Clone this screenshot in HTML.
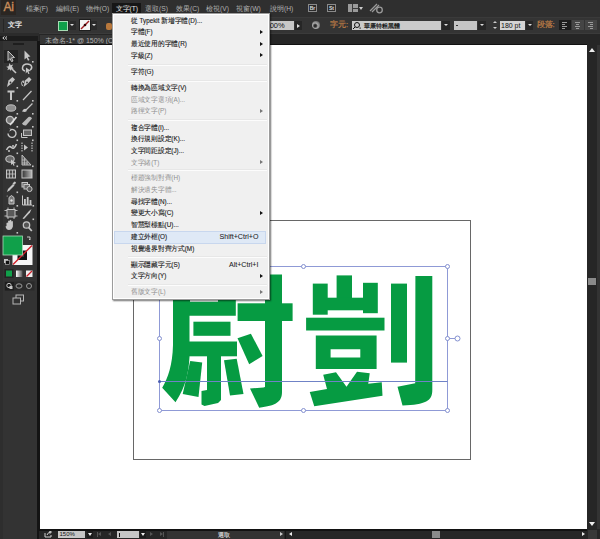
<!DOCTYPE html>
<html><head><meta charset="utf-8">
<style>
*{margin:0;padding:0;box-sizing:border-box}
html,body{width:600px;height:539px;overflow:hidden;background:#fff;font-family:"Liberation Sans",sans-serif}
.a{position:absolute}
.mb{position:absolute;top:4px;font-size:6.7px;line-height:10px;color:#b4b4b4;white-space:nowrap}
.mi{position:absolute;left:18px;font-size:6.6px;line-height:10px;color:#1a1a1a;-webkit-text-stroke:0.12px #1a1a1a;white-space:nowrap;transform:scaleX(0.96);transform-origin:0 50%}
.mi.g{color:#8e8e8e;-webkit-text-stroke:0}
.ar{position:absolute;left:147.5px;width:0;height:0;border-top:2.5px solid transparent;border-bottom:2.5px solid transparent;border-left:3px solid #111}
.ar.g{border-left-color:#777}
.sep{position:absolute;left:15px;width:139px;height:2px;border-top:1px solid #e7e7e7;border-bottom:1px solid #fcfcfc}
</style></head><body>
<!-- menubar -->
<div class="a" style="left:0;top:0;width:600px;height:16.5px;background:#2f2f2f"></div>
<div class="a" style="left:1px;top:0;width:15px;height:15px;background:#2b2622"></div>
<div class="a" style="left:3.5px;top:1px;font-size:12px;line-height:13px;color:#c98e5c;letter-spacing:-0.2px;-webkit-text-stroke:0.35px #c98e5c">Ai</div>
<div class="a" style="left:112px;top:3px;width:29px;height:10px;background:#161616"></div>
<div class="mb" style="left:25.5px">檔案(F)</div>
<div class="mb" style="left:56px">編輯(E)</div>
<div class="mb" style="left:85.5px">物件(O)</div>
<div class="mb" style="left:115.5px;color:#e8e8e8">文字(T)</div>
<div class="mb" style="left:145px">選取(S)</div>
<div class="mb" style="left:176px">效果(C)</div>
<div class="mb" style="left:206px">檢視(V)</div>
<div class="mb" style="left:236px">視窗(W)</div>
<div class="mb" style="left:270px">說明(H)</div>
<div class="a" style="left:308px;top:4px;width:9px;height:8px;border:1px solid #8a8a8a;background:#2a2a2a;font-size:5px;line-height:6px;color:#ddd;text-align:center;font-weight:bold">Br</div>
<div class="a" style="left:327px;top:4px;width:9px;height:8px;border:1px solid #8a8a8a;background:#2a2a2a;font-size:5px;line-height:6px;color:#ddd;text-align:center;font-weight:bold">St</div>
<div class="a" style="left:348px;top:4px;width:10px;height:8px;background:#9a9a9a"></div>
<div class="a" style="left:352px;top:4px;width:1px;height:8px;background:#3a3a3a"></div>
<div class="a" style="left:353px;top:7.5px;width:5px;height:1px;background:#3a3a3a"></div>
<div class="a" style="left:359px;top:7px;width:0;height:0;border-left:2px solid transparent;border-right:2px solid transparent;border-top:3px solid #ccc"></div>
<svg class="a" style="left:369px;top:3px" width="16" height="11"><g stroke="#9a9a9a" stroke-width="1.3" fill="none"><line x1="1" y1="8" x2="8" y2="1"/><line x1="3" y1="9" x2="10" y2="2"/><circle cx="10.5" cy="7" r="2.8"/></g></svg>

<!-- control bar -->
<div class="a" style="left:0;top:16.5px;width:600px;height:17px;background:#343434;border-top:1px solid #3a3a3a;border-bottom:1px solid #3b3b3b"></div>
<div class="a" style="left:2.5px;top:18.5px;width:1px;height:13px;background:#262626"></div>
<div class="a" style="left:8px;top:19.5px;font-size:7px;line-height:10px;color:#e4e4e4;-webkit-text-stroke:0.25px #e4e4e4">文字</div>
<div class="a" style="left:57.5px;top:20px;width:11px;height:11px;background:#262626"></div>
<div class="a" style="left:58px;top:20.5px;width:10px;height:10px;background:#10a04a;border:1px solid #a6dcb4"></div>
<div class="a" style="left:69.5px;top:21px;width:6px;height:9px;background:#2a2a2a"></div>
<div class="a" style="left:70px;top:24px;width:0;height:0;border-left:2px solid transparent;border-right:2px solid transparent;border-top:2.5px solid #ddd"></div>
<div class="a" style="left:79px;top:19px;width:12px;height:12px;background:#1e1e1e"></div>
<div class="a" style="left:80px;top:20px;width:10px;height:10px;background:#f4f4f4"></div>
<svg class="a" style="left:80px;top:20px" width="10" height="10"><line x1="1" y1="9" x2="9" y2="1" stroke="#a01c22" stroke-width="1.5"/><circle cx="5" cy="5" r="1.3" fill="#300"/></svg>
<div class="a" style="left:91px;top:21px;width:6px;height:9px;background:#2a2a2a"></div>
<div class="a" style="left:92px;top:24px;width:0;height:0;border-left:2px solid transparent;border-right:2px solid transparent;border-top:2.5px solid #ddd"></div>
<div class="a" style="left:105.5px;top:22.5px;width:6.5px;height:7px;background:#b8783c;border-radius:2px"></div>
<div class="a" style="left:262px;top:21px;width:32px;height:9px;background:#c8c8c8;font-size:7.5px;line-height:9px;color:#111;padding-left:3.5px">100%</div>
<div class="a" style="left:295px;top:21px;width:7px;height:9px;background:#262626"></div>
<div class="a" style="left:297px;top:23.5px;width:0;height:0;border-top:2px solid transparent;border-bottom:2px solid transparent;border-left:3px solid #ddd"></div>
<div class="a" style="left:312px;top:21px;width:8px;height:8px;border-radius:50%;background:radial-gradient(circle at 40% 60%,#222 0,#333 18%,#aaa 40%,#666 75%)"></div>
<div class="a" style="left:330px;top:20px;font-size:7.5px;line-height:10px;color:#b97a45;-webkit-text-stroke:0.25px #b97a45">字元:</div>
<div class="a" style="left:352px;top:21px;width:89px;height:9px;background:#cacaca"></div>
<svg class="a" style="left:352px;top:21px" width="10" height="9"><g stroke="#111" stroke-width="1" fill="none"><circle cx="5" cy="4" r="2.5"/><line x1="3" y1="6" x2="1" y2="8"/></g><rect x="7.5" y="6.5" width="1.2" height="1.2" fill="#111"/></svg>
<div class="a" style="left:364px;top:20.5px;font-size:6.2px;line-height:9px;color:#111;-webkit-text-stroke:0.2px #111">華康特粗黑體</div>
<div class="a" style="left:442px;top:21px;width:8px;height:9px;background:#262626"></div>
<div class="a" style="left:444px;top:24px;width:0;height:0;border-left:2px solid transparent;border-right:2px solid transparent;border-top:2.5px solid #ddd"></div>
<div class="a" style="left:454px;top:20.5px;width:23px;height:9px;background:#c4c4c4"></div>
<div class="a" style="left:456px;top:25px;width:2px;height:1px;background:#333"></div>
<div class="a" style="left:478px;top:21px;width:8px;height:9px;background:#262626"></div>
<div class="a" style="left:480px;top:24px;width:0;height:0;border-left:2px solid transparent;border-right:2px solid transparent;border-top:2.5px solid #ddd"></div>
<div class="a" style="left:493px;top:21px;width:0;height:0;border-left:2px solid transparent;border-right:2px solid transparent;border-bottom:2.5px solid #ccc"></div>
<div class="a" style="left:493px;top:26.5px;width:0;height:0;border-left:2px solid transparent;border-right:2px solid transparent;border-top:2.5px solid #ccc"></div>
<div class="a" style="left:500px;top:20.5px;width:25px;height:9.5px;background:#d4d4d4;font-size:7px;line-height:9.5px;color:#111;padding-left:1px">180 pt</div>
<div class="a" style="left:526px;top:21px;width:7px;height:9px;background:#262626"></div>
<div class="a" style="left:527.5px;top:24px;width:0;height:0;border-left:2px solid transparent;border-right:2px solid transparent;border-top:2.5px solid #ddd"></div>
<div class="a" style="left:536.5px;top:20px;font-size:7.5px;line-height:10px;color:#b97a45;-webkit-text-stroke:0.25px #b97a45">段落:</div>
<div class="a" style="left:559px;top:20px;width:11.5px;height:10px;background:#1c1c1c"></div>
<div class="a" style="left:572px;top:20px;width:12px;height:10px;background:#454545"></div>
<div class="a" style="left:585px;top:20px;width:12px;height:10px;background:#454545"></div>
<svg class="a" style="left:559px;top:20px" width="40" height="10"><g stroke="#9a9a9a" stroke-width="1"><path d="M3,2.5h5M3,4.5h3M3,6.5h5M3,8.5h3"/><path d="M16,2.5h5M17,4.5h3M16,6.5h5M17,8.5h3"/><path d="M29,2.5h5M31,4.5h3M29,6.5h5M31,8.5h3"/></g></svg>

<!-- tab bar -->
<div class="a" style="left:0;top:33.5px;width:600px;height:11.5px;background:#262626"></div>
<div class="a" style="left:39.5px;top:34.5px;width:73px;height:9.5px;background:#363636"></div>
<div class="a" style="left:45px;top:35.5px;font-size:7px;line-height:9px;color:#b4b4b4;white-space:nowrap">未命名-1* @ 150% (CMYK/預覽)</div>
<div class="a" style="left:39px;top:44px;width:548px;height:1px;background:#111"></div>
<!-- left panel -->
<div class="a" style="left:0;top:33px;width:39px;height:506px;background:#2b2b2b"></div>
<div class="a" style="left:0;top:35.5px;width:38px;height:5.5px;background:#1c1c1c"></div>
<svg class="a" style="left:2px;top:36px" width="6" height="4"><path d="M2.5,0.5 L0.8,2 L2.5,3.5 M5,0.5 L3.3,2 L5,3.5" fill="none" stroke="#e0e0e0" stroke-width="1"/></svg>
<div class="a" style="left:0;top:41px;width:38px;height:498px;background:#333333"></div>
<div class="a" style="left:13px;top:42.5px;width:11px;height:2px;background:#1e1e1e"></div>
<div class="a" style="left:37px;top:41px;width:2.5px;height:498px;background:#141414"></div>
<div class="a" style="left:0;top:41px;width:2.5px;height:498px;background:#2e2e2e"></div>
<div class="a" style="left:4px;top:50px;width:14px;height:12.5px;background:#242424"></div>
<svg class="a" style="left:0;top:45px" width="38" height="265" viewBox="0 45 38 265">
<g fill="#c6c6c6" stroke="none">
<!-- flyout dots -->
<rect x="32" y="61" width="1.6" height="1.6"/>
<rect x="16.5" y="87" width="1.6" height="1.6"/>
<rect x="16.5" y="100" width="1.6" height="1.6"/><rect x="32" y="100" width="1.6" height="1.6"/>
<rect x="16.5" y="113" width="1.6" height="1.6"/><rect x="32" y="113" width="1.6" height="1.6"/>
<rect x="16.5" y="126" width="1.6" height="1.6"/><rect x="32" y="126" width="1.6" height="1.6"/>
<rect x="16.5" y="139.5" width="1.6" height="1.6"/><rect x="32" y="139.5" width="1.6" height="1.6"/>
<rect x="16.5" y="152.5" width="1.6" height="1.6"/>
<rect x="16.5" y="165.5" width="1.6" height="1.6"/><rect x="32" y="165.5" width="1.6" height="1.6"/>
<rect x="16.5" y="191.5" width="1.6" height="1.6"/>
<rect x="16.5" y="205" width="1.6" height="1.6"/><rect x="32.5" y="205" width="1.6" height="1.6"/>
<rect x="32.5" y="218.5" width="1.6" height="1.6"/>
<rect x="16.5" y="232" width="1.6" height="1.6"/>
<!-- row1 selection -->
<path d="M8,51 L14.5,57.5 L11.5,57.8 L13,61 L11.5,61.6 L10,58.5 L8,60.5 Z" fill="#555" stroke="#c6c6c6" stroke-width="1"/>
<path d="M24.5,50.5 L30.5,56.5 L27.8,57 L29.5,60 L28,60.8 L26.5,57.8 L24.5,59.5 Z"/>
<!-- row2 magic wand / lasso -->
<path d="M9.5,63 l1.2,2.2 2.4,-0.6 -1.2,2.2 1.8,1.6 -2.4,0.3 -0.3,2.4 -1.5,-1.8 -2.2,1 0.9,-2.2 -2,-1.3 2.4,-0.5 Z"/>
<line x1="11" y1="68" x2="16" y2="73" stroke="#c6c6c6" stroke-width="1.6"/>
<path d="M25,71 C21,70 22,64 27,64 C32,64 33,68 30,70" fill="none" stroke="#c6c6c6" stroke-width="1.5"/>
<path d="M26,67.5 l5,3.5 -2.5,0.3 1,2.4 -1.2,0.4 -1,-2.3 -1.6,1.6 Z"/>
<!-- row3 pen -->
<path d="M7,87 L8.5,80.5 L12.5,77 L15,79.5 L11.5,83.5 Z"/><circle cx="10.5" cy="82.5" r="0.9" fill="#333"/>
<path d="M23.5,87 L25,80.5 L29,77 L31.5,79.5 L28,83.5 Z"/><circle cx="27" cy="82.5" r="0.9" fill="#333"/>
<path d="M22.5,86 q-2,-3 0,-5 q2,-1 1,2" fill="none" stroke="#c6c6c6" stroke-width="1"/>
<!-- row4 T / line -->
<path d="M7.5,90.5 H14.5 V92.5 H12 V100 H10 V92.5 H7.5 Z"/>
<line x1="23" y1="100" x2="31.5" y2="91" stroke="#c6c6c6" stroke-width="1.2"/>
<!-- row5 ellipse / brush -->
<ellipse cx="11" cy="108" rx="4.8" ry="3.2" fill="#8e8e8e" stroke="#c6c6c6" stroke-width="0.9"/>
<path d="M22,111.5 q1.5,-3.5 4,-2.5 l6,-6 0.9,0.9 -6,6 q0,3 -4.9,1.6 Z"/>
<!-- row6 blob / eraser -->
<circle cx="10" cy="120" r="3.6" fill="#777" stroke="#c6c6c6" stroke-width="1.4"/>
<line x1="10" y1="125" x2="16.5" y2="117" stroke="#e0e0e0" stroke-width="1.7"/>
<path d="M22,123.5 L28.5,117 Q31,116 32,118.5 L26,125.5 Q23,126 22,123.5 Z" fill="#b8b8b8"/>
<!-- row7 rotate / scale -->
<path d="M8,133.5 a4,4 0 1 0 2.5,-3.8" fill="none" stroke="#c6c6c6" stroke-width="1.4"/>
<path d="M10,128.5 l1.5,1.5 -2,1" fill="none" stroke="#c6c6c6" stroke-width="0.9"/>
<rect x="23.5" y="130" width="8" height="5.5" fill="#666" stroke="#c6c6c6" stroke-width="1"/>
<path d="M21.5,133 v4.5 h6" fill="none" stroke="#c6c6c6" stroke-width="1"/>
<!-- row8 width / free transform -->
<path d="M6.5,150 q2.5,-5 5,-2.5 q2.5,2.5 5,-3.5" fill="none" stroke="#c6c6c6" stroke-width="1.6"/>
<circle cx="9" cy="151" r="1" /><circle cx="13" cy="146" r="1"/>
<path d="M22,142.5 v10 M32,142.5 v10" fill="none" stroke="#c6c6c6" stroke-width="1.1" stroke-dasharray="1.6 0.9"/>
<path d="M24,144.5 l4,3 -4,3 Z"/>
<!-- row9 shape builder / perspective -->
<ellipse cx="10" cy="159" rx="4.2" ry="3.2" fill="#6a6a6a" stroke="#c6c6c6" stroke-width="1.1"/>
<path d="M11,159.5 l5,3.5 -2.3,0.4 0.9,2 -1.1,0.4 -0.9,-2 -1.6,1.3 Z"/>
<path d="M22,155 L31,165 H22 Z" fill="#5e5e5e" stroke="#c6c6c6" stroke-width="0.9"/>
<path d="M24.5,158 v7 M27,161 v4 M22,160 h4 M22,163 h6" stroke="#c6c6c6" stroke-width="0.7"/>
<!-- row10 mesh / gradient -->
<rect x="6.5" y="170" width="9" height="8" fill="#4a4a4a" stroke="#c6c6c6" stroke-width="1"/>
<path d="M9.5,170 v8 M12.5,170 v8 M6.5,174 h9" stroke="#c6c6c6" stroke-width="0.8"/>
<rect x="22" y="170" width="10" height="8" fill="url(#gr2)" stroke="#c6c6c6" stroke-width="1"/>
<!-- row11 eyedropper / blend -->
<path d="M7,192 L8,189 L13,184 L14.5,185.5 L9.5,190.5 Z"/>
<path d="M12.5,183.5 l2,-2 q1.5,0 1.5,1.5 l-2,2 Z"/>
<rect x="22" y="182.5" width="5.5" height="4.5" fill="#666" stroke="#c6c6c6" stroke-width="1"/>
<rect x="24" y="184.5" width="5.5" height="4.5" fill="#666" stroke="#c6c6c6" stroke-width="1"/>
<circle cx="29.5" cy="189" r="2.6" fill="#555" stroke="#c6c6c6" stroke-width="1"/>
<!-- row12 symbol sprayer / graph -->
<path d="M9,197.5 l2.5,-2 2.5,2 v6.5 h-5 Z" fill="#777" stroke="#c6c6c6" stroke-width="1"/>
<circle cx="11.5" cy="200.5" r="1.2" fill="#ddd"/><circle cx="7.2" cy="196" r="0.6"/>
<path d="M22.5,195.5 v9.5 h9.5" fill="none" stroke="#c6c6c6" stroke-width="1"/>
<rect x="24" y="199" width="1.8" height="6"/><rect x="26.8" y="197" width="1.8" height="8"/><rect x="29.6" y="200" width="1.8" height="5"/>
<!-- row13 artboard / slice -->
<rect x="7" y="209.5" width="8" height="7.5" fill="#5a5a5a" stroke="#c6c6c6" stroke-width="1"/>
<path d="M4.5,210.5 h2.5 M15,210.5 h2.5 M4.5,216 h2.5 M15,216 h2.5 M8,207.5 v2 M14,207.5 v2 M8,217 v2 M14,217 v2" stroke="#c6c6c6" stroke-width="0.9"/>
<path d="M22.5,218.5 L29,211 L31.5,209 L30,212.5 L24,219 Z"/>
<!-- row14 hand / zoom -->
<path d="M6.5,226 v-3 q1,-1 1.6,0 v-2 q1,-1 1.6,0 v-0.8 q1,-1 1.6,0 v1.2 q1,-1 1.6,0 v5 q-1,3.5 -4,3.5 q-2.5,0 -3.4,-3.5 Z"/>
<circle cx="26.5" cy="225" r="3.2" fill="#555" stroke="#c6c6c6" stroke-width="1.3"/>
<line x1="28.7" y1="227.5" x2="31.8" y2="231" stroke="#c6c6c6" stroke-width="1.8"/>
</g>
<defs><linearGradient id="gr2"><stop offset="0" stop-color="#333"/><stop offset="1" stop-color="#bbb"/></linearGradient></defs>
<!-- fill / stroke -->
<rect x="12.5" y="245" width="20" height="20" fill="#f6f6f6"/>
<rect x="17.5" y="250.5" width="9.5" height="9.5" fill="#111"/>
<rect x="20.5" y="253.5" width="3.5" height="3.5" fill="#333"/>
<line x1="13" y1="264.5" x2="32" y2="245.5" stroke="#d0202a" stroke-width="1.4"/>
<rect x="3" y="236" width="19.5" height="19" fill="#10a04a" stroke="#a8d8b8" stroke-width="0.8"/>
<path d="M27,237 h3 v3 M30,240 l-1,-1" fill="none" stroke="#c6c6c6" stroke-width="1"/>
<rect x="4" y="259" width="4" height="4" fill="#c6c6c6"/><rect x="5.5" y="260.5" width="4" height="4" fill="#111" stroke="#c6c6c6" stroke-width="0.6"/>
<!-- color mode buttons -->
<rect x="4.5" y="269" width="9" height="9" fill="#232323"/>
<rect x="6" y="270.5" width="6" height="6" fill="#10a04a"/>
<rect x="16" y="270.5" width="6.5" height="6.5" fill="url(#gr)"/>
<rect x="26" y="270.5" width="6.5" height="6.5" fill="#eee"/>
<line x1="26.5" y1="276.5" x2="32" y2="271" stroke="#d0202a" stroke-width="1.2"/>
<defs><linearGradient id="gr"><stop offset="0" stop-color="#fff"/><stop offset="1" stop-color="#555"/></linearGradient></defs>
<!-- draw modes -->
<rect x="4.5" y="281.5" width="30" height="9" fill="#2a2a2a"/>
<rect x="5" y="282" width="9" height="8.5" fill="#1e1e1e"/>
<circle cx="9" cy="285.5" r="2.2" fill="none" stroke="#c6c6c6" stroke-width="1"/><rect x="9.5" y="286" width="3" height="3" fill="#c6c6c6"/>
<ellipse cx="19" cy="286" rx="3" ry="2.2" fill="none" stroke="#9a9a9a" stroke-width="1"/>
<circle cx="29" cy="286" r="2.5" fill="none" stroke="#9a9a9a" stroke-width="1"/>
<!-- screen mode -->
<rect x="16" y="295" width="7.5" height="6" fill="none" stroke="#b6b6b6" stroke-width="1"/>
<rect x="13" y="298" width="7.5" height="6" fill="#333" stroke="#b6b6b6" stroke-width="1"/>
</svg>
<!-- canvas -->
<div class="a" style="left:39.5px;top:45px;width:547.5px;height:484px;background:#fff"></div>
<!-- right scrollbar -->
<div class="a" style="left:587px;top:45px;width:13px;height:494px;background:#262626"></div>
<div class="a" style="left:597px;top:45px;width:3px;height:494px;background:#333"></div>
<div class="a" style="left:589px;top:48px;width:0;height:0;border-left:3.5px solid transparent;border-right:3.5px solid transparent;border-bottom:4px solid #eee"></div>
<div class="a" style="left:588px;top:277.5px;width:8px;height:7.5px;background:#8a8a8a"></div>
<div class="a" style="left:589px;top:522px;width:0;height:0;border-left:3.5px solid transparent;border-right:3.5px solid transparent;border-top:4px solid #eee"></div>
<!-- status bar -->
<div class="a" style="left:39px;top:529px;width:561px;height:10px;background:#262626"></div>
<div class="a" style="left:39px;top:529px;width:548px;height:1.5px;background:#121212"></div>
<div class="a" style="left:167px;top:530.5px;width:117px;height:8.5px;background:#333"></div>
<div class="a" style="left:284.5px;top:530.5px;width:1.5px;height:8.5px;background:#151515"></div>
<svg class="a" style="left:44px;top:531px" width="9" height="7"><path d="M1,2 v4 h6 v-2" fill="none" stroke="#cfcfcf" stroke-width="1"/><path d="M3,4 q1,-3 4,-3 M5,0 l2.5,1 -2,1.8" fill="none" stroke="#cfcfcf" stroke-width="1"/></svg>
<div class="a" style="left:58px;top:531.3px;width:27px;height:6.5px;background:#c6c6c6;font-size:6px;line-height:6.5px;color:#111;padding-left:1.5px">150%</div>
<div class="a" style="left:86.5px;top:531px;width:6px;height:7px;background:#1c1c1c"></div>
<div class="a" style="left:87.5px;top:533px;width:0;height:0;border-left:2px solid transparent;border-right:2px solid transparent;border-top:3px solid #eee"></div>
<div class="a" style="left:97px;top:532px;width:1px;height:5px;background:#555"></div>
<div class="a" style="left:98px;top:532px;width:0;height:0;border-top:2.5px solid transparent;border-bottom:2.5px solid transparent;border-right:3px solid #555"></div>
<div class="a" style="left:108px;top:532px;width:0;height:0;border-top:2.5px solid transparent;border-bottom:2.5px solid transparent;border-right:3px solid #555"></div>
<div class="a" style="left:116.5px;top:531.3px;width:22px;height:6.5px;background:#c6c6c6"></div>
<div class="a" style="left:118.5px;top:532.5px;width:1px;height:4px;background:#111"></div>
<div class="a" style="left:140px;top:531px;width:6px;height:7px;background:#1c1c1c"></div>
<div class="a" style="left:141px;top:533px;width:0;height:0;border-left:2px solid transparent;border-right:2px solid transparent;border-top:3px solid #eee"></div>
<div class="a" style="left:150px;top:532px;width:0;height:0;border-top:2.5px solid transparent;border-bottom:2.5px solid transparent;border-left:3px solid #555"></div>
<div class="a" style="left:159.5px;top:532px;width:0;height:0;border-top:2.5px solid transparent;border-bottom:2.5px solid transparent;border-left:3px solid #555"></div>
<div class="a" style="left:163px;top:532px;width:1px;height:5px;background:#555"></div>
<div class="a" style="left:218px;top:530.5px;font-size:5.5px;line-height:8px;color:#ddd;-webkit-text-stroke:0.15px #ddd">選取</div>
<div class="a" style="left:279.5px;top:532px;width:0;height:0;border-top:2.5px solid transparent;border-bottom:2.5px solid transparent;border-left:3.5px solid #ccc"></div>
<div class="a" style="left:288.5px;top:532px;width:0;height:0;border-top:2.5px solid transparent;border-bottom:2.5px solid transparent;border-right:3.5px solid #eee"></div>
<div class="a" style="left:432px;top:531px;width:8px;height:7px;background:#8a8a8a"></div>
<div class="a" style="left:582px;top:532px;width:0;height:0;border-top:2.5px solid transparent;border-bottom:2.5px solid transparent;border-left:3.5px solid #eee"></div>
<div class="a" style="left:588px;top:530px;width:9px;height:9px;background:#383838"></div>

<!-- artboard -->
<div class="a" style="left:132.5px;top:220px;width:338px;height:239.5px;border:1.3px solid #676767"></div>

<!-- glyphs -->
<svg class="a" style="left:0;top:0" width="600" height="539" viewBox="0 0 600 539">
<g fill="#069b42">
<!-- 尉: shi box -->
<path d="M173,283 H235.8 V315.8 H173 Z M190,292 V301.7 H218 V292 Z" fill-rule="evenodd"/>
<!-- left sweeping stroke -->
<path d="M173,283 H189.5 V357 C188.7,372 186.2,386 175.5,402.2 L162.2,387.8 C168,378 172.5,365 173,345 Z"/>
<rect x="193.4" y="321.7" width="37.1" height="14.1"/>
<rect x="173" y="341.5" width="64" height="14.8"/>
<path d="M190.2,361 L202.2,362.5 L198.5,397 L182.7,394 Z"/>
<path d="M207,354 L221,354 L221,400 L218,403 L204.5,406 L201.5,404.5 L201.5,391 L207,390 Z"/>
<path d="M224,360.2 L236.7,358.7 L243.5,394 L230,395.5 Z"/>
<rect x="237.6" y="303.3" width="55" height="17.7"/>
<path d="M265,274.5 H282 V392 C282,402 276,405.5 259.2,407.8 L250,388.4 L263.4,387.6 L265,387 Z"/>
<path d="M237.5,338.3 L250.9,333.7 L262.6,355.9 L249.2,364.2 Z"/>
<!-- 剴 -->
<rect x="312.8" y="283.6" width="14.9" height="31.1"/>
<rect x="336.6" y="275.4" width="15.4" height="24"/>
<rect x="327" y="297.7" width="37" height="12.6"/>
<rect x="363" y="282.8" width="14.8" height="30.4"/>
<rect x="306.1" y="317.7" width="78.4" height="12.8"/>
<path d="M315.8,335.5 H376.6 V369 H315.8 Z M330.6,349.3 V357.5 H360.3 V349.3 Z" fill-rule="evenodd"/>
<path d="M323.2,374.75 L336,372.2 L346.5,386.75 L357,371.75 L369.75,373.25 L368.25,383.75 L381.75,382.25 L382.5,395.75 L314.25,406.25 L309.75,392 L327,389 Z"/>
<rect x="391" y="283.6" width="16" height="79"/>
<path d="M415.4,276 H432.3 V390 C432.3,401 426,404.5 402.5,405.5 L397.5,386.7 L415.2,383.3 Z"/>
</g>
</svg>

<!-- bbox -->
<svg class="a" style="left:0;top:0" width="600" height="539" viewBox="0 0 600 539">
<g stroke="#8f9ad6" stroke-width="1" fill="none">
<rect x="159.5" y="266.5" width="288" height="144"/>
<line x1="447.5" y1="338.5" x2="455" y2="338.5"/>
</g>
<g stroke="#8390d0" stroke-width="1" fill="#fff">
<circle cx="159.5" cy="266.5" r="2"/><circle cx="303.5" cy="266.5" r="2"/><circle cx="447.5" cy="266.5" r="2"/>
<circle cx="159.5" cy="338.5" r="2"/><circle cx="447.5" cy="338.5" r="2"/>
<circle cx="159.5" cy="410.5" r="2"/><circle cx="303.5" cy="410.5" r="2"/><circle cx="447.5" cy="410.5" r="2"/>
<circle cx="457.5" cy="338.5" r="2.5"/>
</g>
<line x1="159.5" y1="381.5" x2="447.5" y2="381.5" stroke="#6f82c6" stroke-width="1"/>
<circle cx="159.5" cy="381.5" r="1.5" fill="#4a5cb0"/>
</svg>

<!-- dropdown menu -->
<div class="a" style="left:111.5px;top:12.5px;width:158.5px;height:287px;background:#f0f0f0;border:1px solid #9c9c9c;box-shadow:inset 1px -1px 0 #fff,inset -1px 1px 0 #fff,1px 1px 1.5px rgba(0,0,0,.55)">
<div class="a" style="left:1px;top:217.5px;width:152px;height:12.5px;background:#dfe9f6;border:1px solid #c8d7ee"></div>
<div class="mi" style="top:2.8px">從 Typekit 新增字體(D)...</div>
<div class="mi" style="top:13.6px">字體(F)</div>
<div class="ar" style="top:16.1px"></div>
<div class="mi" style="top:25.7px">最近使用的字體(R)</div>
<div class="ar" style="top:28.2px"></div>
<div class="mi" style="top:37.3px">字級(Z)</div>
<div class="ar" style="top:39.8px"></div>
<div class="mi" style="top:53.6px">字符(G)</div>
<div class="mi" style="top:69.6px">轉換為區域文字(V)</div>
<div class="mi g" style="top:81.2px">區域文字選項(A)...</div>
<div class="mi g" style="top:92.8px">路徑文字(P)</div>
<div class="ar g" style="top:95.3px"></div>
<div class="mi" style="top:109.3px">複合字體(I)...</div>
<div class="mi" style="top:120.9px">換行規則設定(K)...</div>
<div class="mi" style="top:132.5px">文字間距設定(J)...</div>
<div class="mi g" style="top:144.1px">文字緒(T)</div>
<div class="ar g" style="top:146.6px"></div>
<div class="mi g" style="top:159.7px">標題強制對齊(H)</div>
<div class="mi g" style="top:171.4px">解決遺失字體...</div>
<div class="mi" style="top:183.0px">尋找字體(N)...</div>
<div class="mi" style="top:194.7px">變更大小寫(C)</div>
<div class="ar" style="top:197.2px"></div>
<div class="mi" style="top:206.3px">智慧型標點(U)...</div>
<div class="mi" style="top:218.3px">建立外框(O)</div>
<div class="mi" style="top:218.3px;left:auto;right:10.5px;transform:none;font-size:7.1px;-webkit-text-stroke:0.05px #222">Shift+Ctrl+O</div>
<div class="mi" style="top:230.0px">視覺邊界對齊方式(M)</div>
<div class="mi" style="top:246.3px">顯示隱藏字元(S)</div>
<div class="mi" style="top:246.3px;left:auto;right:10.5px;transform:none;font-size:7.1px;-webkit-text-stroke:0.05px #222">Alt+Ctrl+I</div>
<div class="mi" style="top:257.9px">文字方向(Y)</div>
<div class="ar" style="top:260.4px"></div>
<div class="mi g" style="top:273.5px">舊版文字(L)</div>
<div class="ar g" style="top:276.0px"></div>
<div class="sep" style="top:50.0px"></div>
<div class="sep" style="top:66.5px"></div>
<div class="sep" style="top:105.4px"></div>
<div class="sep" style="top:155.7px"></div>
<div class="sep" style="top:242.9px"></div>
<div class="sep" style="top:270.5px"></div>
</div>
</body></html>
